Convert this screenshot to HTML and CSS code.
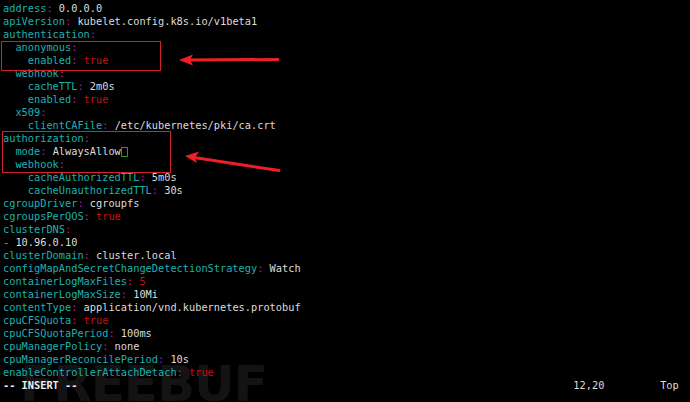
FILE: index.html
```html
<!DOCTYPE html>
<html>
<head>
<meta charset="utf-8">
<link rel="stylesheet" href="styles.css">
</head>
<body>
<div class="term">
<div class="watermark" aria-hidden="true">FREEBUF</div>
<pre class="buf"><span class="k">address</span><span class="c">:</span> <span class="v">0.0.0.0</span>
<span class="k">apiVersion</span><span class="c">:</span> <span class="v">kubelet.config.k8s.io/v1beta1</span>
<span class="k">authentication</span><span class="c">:</span>
  <span class="k">anonymous</span><span class="c">:</span>
    <span class="k">enabled</span><span class="c">:</span> <span class="t">true</span>
  <span class="k">webhook</span><span class="c">:</span>
    <span class="k">cacheTTL</span><span class="c">:</span> <span class="v">2m0s</span>
    <span class="k">enabled</span><span class="c">:</span> <span class="t">true</span>
  <span class="k">x509</span><span class="c">:</span>
    <span class="k">clientCAFile</span><span class="c">:</span> <span class="v">/etc/kubernetes/pki/ca.crt</span>
<span class="k">authorization</span><span class="c">:</span>
  <span class="k">mode</span><span class="c">:</span> <span class="v">AlwaysAllow</span><span class="cursor"></span>
  <span class="k">webhook</span><span class="c">:</span>
    <span class="k">cacheAuthorizedTTL</span><span class="c">:</span> <span class="v">5m0s</span>
    <span class="k">cacheUnauthorizedTTL</span><span class="c">:</span> <span class="v">30s</span>
<span class="k">cgroupDriver</span><span class="c">:</span> <span class="v">cgroupfs</span>
<span class="k">cgroupsPerQOS</span><span class="c">:</span> <span class="t">true</span>
<span class="k">clusterDNS</span><span class="c">:</span>
<span class="d">-</span> <span class="v">10.96.0.10</span>
<span class="k">clusterDomain</span><span class="c">:</span> <span class="v">cluster.local</span>
<span class="k">configMapAndSecretChangeDetectionStrategy</span><span class="c">:</span> <span class="v">Watch</span>
<span class="k">containerLogMaxFiles</span><span class="c">:</span> <span class="t">5</span>
<span class="k">containerLogMaxSize</span><span class="c">:</span> <span class="v">10Mi</span>
<span class="k">contentType</span><span class="c">:</span> <span class="v">application/vnd.kubernetes.protobuf</span>
<span class="k">cpuCFSQuota</span><span class="c">:</span> <span class="t">true</span>
<span class="k">cpuCFSQuotaPeriod</span><span class="c">:</span> <span class="v">100ms</span>
<span class="k">cpuManagerPolicy</span><span class="c">:</span> <span class="v">none</span>
<span class="k">cpuManagerReconcilePeriod</span><span class="c">:</span> <span class="v">10s</span>
<span class="k">enableControllerAttachDetach</span><span class="c">:</span> <span class="t">true</span>
<span class="mode">-- INSERT --</span><span class="v">                                                                                12,20         Top</span></pre>
<div class="box box1"></div>
<div class="box box2"></div>
<svg class="arrows" width="690" height="402" viewBox="0 0 690 402">
  <line x1="278" y1="59.5" x2="188" y2="60" stroke="#ee1f26" stroke-width="3" stroke-linecap="round"/>
  <polygon points="179,60 193,54.5 190,60 193,65.5" fill="#ee1f26"/>
  <line x1="279" y1="170.5" x2="194" y2="157.5" stroke="#ee1f26" stroke-width="3" stroke-linecap="round"/>
  <polygon points="185,156 199,151.5 195,157.8 197,163" fill="#ee1f26"/>
</svg>
</div>
</body>
</html>
```

FILE: styles.css
```css
html, body {
  margin: 0;
  padding: 0;
  background: #000;
}
.term {
  position: relative;
  width: 690px;
  height: 402px;
  overflow: hidden;
  background: #000;
}
.buf {
  position: relative;
  margin: 0;
  padding: 2px 0 0 3px;
  font-family: "DejaVu Sans Mono", monospace;
  font-size: 10.3px;
  line-height: 13px;
  color: #d8d8d8;
}
.k { color: #1cb2b2; }
.c { color: #b218b2; }
.v { color: #dcdcdc; }
.t { color: #c81010; }
.d { color: #c8a800; }
.mode { color: #f0f0f0; font-weight: bold; }
.cursor {
  display: inline-block;
  box-sizing: border-box;
  width: 7px;
  height: 10px;
  border: 1px solid #1ea01e;
  vertical-align: -2px;
}
.watermark {
  position: absolute;
  left: 20px;
  top: 354px;
  font-family: "DejaVu Sans", sans-serif;
  font-weight: bold;
  font-size: 50px;
  line-height: 60px;
  letter-spacing: -1px;
  color: #131313;
}
.box {
  position: absolute;
  border: 1px solid #d3222a;
}
.box1 { left: 1px; top: 41px; width: 158px; height: 28px; }
.box2 { left: 2px; top: 131px; width: 167px; height: 40px; }
.arrows {
  position: absolute;
  left: 0;
  top: 0;
}
```
